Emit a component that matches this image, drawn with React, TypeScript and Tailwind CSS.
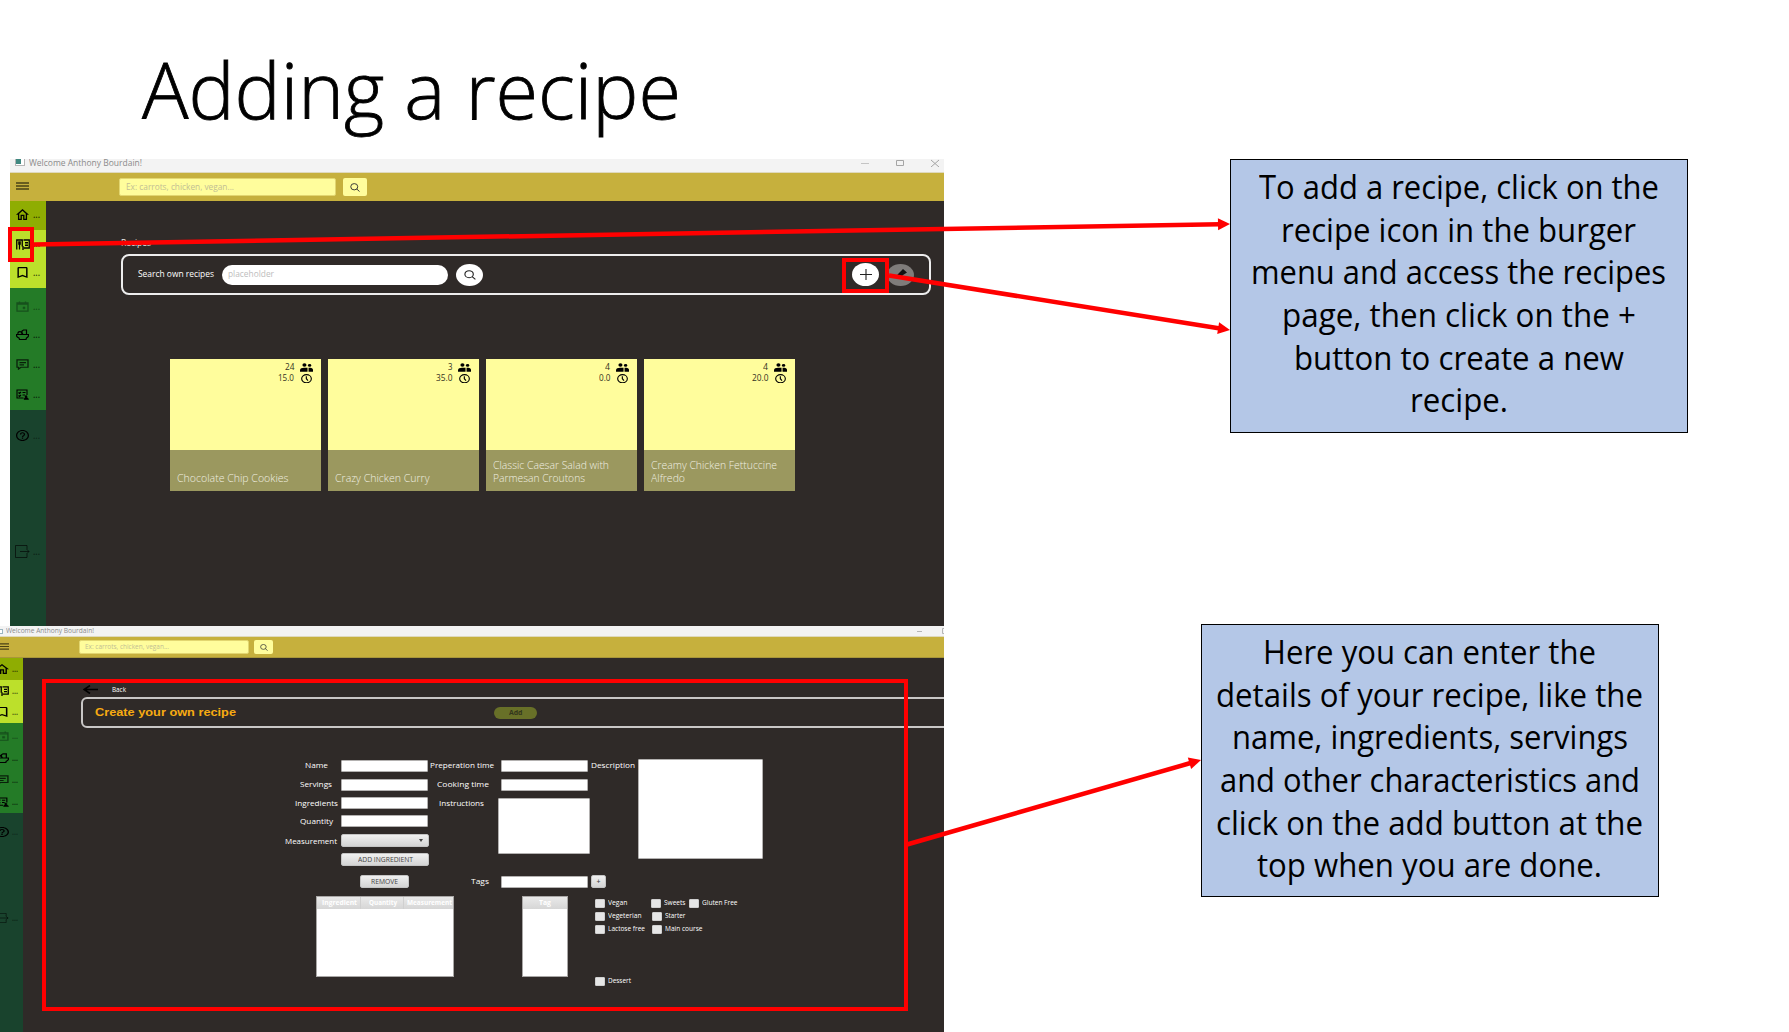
import { useLayoutEffect, useRef, useState, type ReactNode } from "react";
import { MdOutlineHome, MdBookmarkBorder, MdHelpOutline } from "react-icons/md";

/* A single line of text squeezed or stretched to an exact width. */
function Fit({ w, className = "", children }: { w: number; className?: string; children: ReactNode }) {
  const ref = useRef<HTMLSpanElement>(null);
  const [k, setK] = useState(1);
  useLayoutEffect(() => {
    if (ref.current && ref.current.offsetWidth) {
      const probe = document.createRange();
      probe.selectNodeContents(ref.current);
      setK(w / probe.getBoundingClientRect().width);
    }
  }, []);
  return (
    <span className={`block shrink-0 whitespace-nowrap leading-none ${className}`} style={{ width: w }}>
      <span ref={ref} className="inline-block origin-left" style={{ transform: `scaleX(${k})` }}>
        {children}
      </span>
    </span>
  );
}

const svg = { fill: "none", stroke: "currentColor", preserveAspectRatio: "none" as const };

const RecipeIcon = ({ className }: { className: string }) => (
  <svg viewBox="0 0 28 22" className={className} {...svg} strokeWidth="2.6">
    <path d="M1.500 21V2h11v13M15 2h11.500v16H15M18 7.500h6M18 12.500h6" />
    <path d="M7 6v15M14 14v8" strokeWidth="2.6" />
    <path d="M5 5h4v6H5z" fill="currentColor" strokeWidth="1" />
  </svg>
);
const CalendarIcon = ({ className }: { className: string }) => (
  <svg viewBox="0 0 26 24" className={className} {...svg} strokeWidth="2.6">
    <path d="M2 4h22v18H2zM2 7h22M7 1v4M19 1v4" />
    <path d="M14 13h4v4h-4z" fill="currentColor" strokeWidth="1" />
  </svg>
);
const ChatIcon = ({ className }: { className: string }) => (
  <svg viewBox="0 0 26 24" className={className} {...svg} strokeWidth="2.6">
    <path d="M2 2h22v16H10l-5 4v-4H2zM7 8h13M7 13h9" />
  </svg>
);
const BowlIcon = ({ className }: { className: string }) => (
  <svg viewBox="0 0 26 22" className={className} {...svg} strokeWidth="2.4">
    <path d="M1 11h24v2c0 3-2 4-4 5l-1 3H7l-1-3c-3-1-5-2-5-5zM4 10c-1-4 3-6 7-4M12 10V4l3-2h6v9M10 7l4 3" />
  </svg>
);
const ListIcon = ({ className }: { className: string }) => (
  <svg viewBox="0 0 26 22" className={className} {...svg} strokeWidth="2.2">
    <path d="M15 18H2V2h20v10M5 7l2 2 3-3M13 7h6M5 13l2 2 3-3M13 12h5" />
    <path d="M16 21c0-3 2-4 4-4s5 1 5 4zM18 15a2 2 0 1 0 4 0a2 2 0 1 0-4 0" fill="currentColor" strokeWidth="1" />
  </svg>
);
const LogoutIcon = ({ className }: { className: string }) => (
  <svg viewBox="0 0 30 26" className={className} {...svg} strokeWidth="2">
    <path d="M24 8V1H1v24h23v-7M10 13h18M23 8l5 5-5 5" />
  </svg>
);
const SearchIcon = ({ className }: { className: string }) => (
  <svg viewBox="0 0 20 18" className={className} {...svg} strokeWidth="1.9">
    <ellipse cx="8.5" cy="7.5" rx="7" ry="6.3" />
    <path d="M13.500 12l5.500 5" />
  </svg>
);
const PeopleIcon = ({ className }: { className: string }) => (
  <svg viewBox="0 0 38 28" className={className} fill="currentColor" preserveAspectRatio="none">
    <ellipse cx="13" cy="6.5" rx="6" ry="5.5" />
    <ellipse cx="28" cy="7.500" rx="5" ry="4.500" />
    <path d="M0 27v-4c0-6 6-8 12-8h10v12zM25 27V15h5c5 0 8 3 8 7v5z" />
  </svg>
);
const ClockIcon = ({ className }: { className: string }) => (
  <svg viewBox="0 0 33 28" className={className} {...svg} strokeWidth="3.4">
    <ellipse cx="16.5" cy="14" rx="14.500" ry="12" />
    <path d="M16 6.500V14l5 5.500" />
  </svg>
);
const Burger = ({ className }: { className: string }) => (
  <svg viewBox="0 0 13 8" className={className} {...svg} strokeWidth="1.3">
    <path d="M0 1h13M0 4h13M0 7h13" />
  </svg>
);

function Item({ small, h, dim, dot = "text-black/70", children }: { small?: boolean; h: string; dim?: string; dot?: string; children: ReactNode }) {
  return (
    <div className={`flex items-center ${h} ${small ? "gap-[3px] -ml-[5px]" : "gap-[4px] pl-[6px] -mt-px mb-px"} ${dim ?? "text-black"}`}>
      {children}
      <Fit w={small ? 6 : 7} className={`font-bold ${small ? "text-[8px]" : "text-[9px]"} ${dot}`}>...</Fit>
    </div>
  );
}

function Sidebar({ small }: { small?: boolean }) {
  const ic = small ? "w-[14px] h-[10px] shrink-0" : "w-[13px] h-[11px] shrink-0";
  const md = { preserveAspectRatio: "none", viewBox: "2 2 20 20" };
  const s = small;
  return (
    <nav className={`shrink-0 flex flex-col bg-[#19432d] ${s ? "w-[23px]" : "w-[36px]"}`}>
      <div className="flow-root bg-[#8fad02]">
        <Item small={s} h={s ? "h-[22px]" : "h-[29px]"}><MdOutlineHome className={ic} {...md} viewBox="2 3 20 17" /></Item>
      </div>
      <div className={`flow-root bg-[#bce02b] ${s ? "h-[43px]" : "h-[58px]"}`}>
        <Item small={s} h={s ? "h-[21px]" : "h-[29px]"}><RecipeIcon className={s ? ic : "w-[14px] h-[11px] mt-[2px] shrink-0 -mr-px"} /></Item>
        <Item small={s} h={s ? "h-[21px]" : "h-[29px]"}><MdBookmarkBorder className={ic} {...md} viewBox="3 3 18 18" /></Item>
      </div>
      <div className={`flow-root bg-[#247b27] ${s ? "h-[90px] pt-[2px]" : "h-[122px] pt-[5px]"}`}>
        <Item small={s} h={s ? "h-[22px]" : "h-[28px]"} dim="text-[#16501c]" dot="text-black/40"><CalendarIcon className={ic} /></Item>
        <Item small={s} h={s ? "h-[21px]" : "h-[29px]"}><BowlIcon className={ic} /></Item>
        <Item small={s} h={s ? "h-[23px]" : "h-[30px]"} dim="text-black/75"><ChatIcon className={ic} /></Item>
        <Item small={s} h={s ? "h-[22px]" : "h-[30px]"}><ListIcon className={ic} /></Item>
      </div>
      <div className={s ? "pt-[9px]" : "pt-[11px]"}>
        <Item small={s} h={s ? "h-[20px]" : "h-[30px]"} dot="text-black/40"><MdHelpOutline className={ic} {...md} /></Item>
      </div>
      <div className={s ? "mt-[66px]" : "mt-[86px]"}>
        <Item small={s} h={s ? "h-[20px]" : "h-[30px]"} dim="text-black/60" dot="text-black/50"><LogoutIcon className={s ? ic : "w-[15px] h-[13px] shrink-0 -ml-px -mr-px"} /></Item>
      </div>
    </nav>
  );
}

const recipes = [
  { n: "24", nw: 9.5, t: "15.0", tw: 16, lines: [["Chocolate Chip Cookies", 111.5]] },
  { n: "3", nw: 4.5, t: "35.0", tw: 16.5, lines: [["Crazy Chicken Curry", 94.5]] },
  { n: "4", nw: 5, t: "0.0", tw: 11.5, lines: [["Classic Caesar Salad with", 116], ["Parmesan Croutons", 92]] },
  { n: "4", nw: 5, t: "20.0", tw: 16.5, lines: [["Creamy Chicken Fettuccine", 126], ["Alfredo", 34]] },
] as { n: string; nw: number; t: string; tw: number; lines: [string, number][] }[];

function RecipesWindow() {
  return (
    <section className="ml-[10px] h-[467px] w-[934px] flex flex-col bg-[#2f2a28] font-['Open_Sans','Noto_Sans',sans-serif]">
      <div className="flex h-[14px] items-start bg-[#f3f3f3] pl-[5px] border-b border-[#dfd9bd]">
        <span className="flex h-[7px] w-[10px] border border-t-0 border-[#b5b5b5] bg-white"><i className="block h-[5px] w-[5px] bg-[#3f8880]" /></span>
        <Fit w={113} className="ml-[4px] -mt-[0.5px] text-[8.5px] text-[#8b8b8b]">Welcome Anthony Bourdain!</Fit>
        <svg className="ml-auto mr-[5px] h-[8px] w-[78px]" viewBox="0 0 78 8" fill="none" stroke="#a5a5a5">
          <path d="M0 4.500h8" stroke="#c4c4c4" />
          <path d="M70 1l8 7M78 1l-8 7M35.500 1.500h7v5h-7z" />
        </svg>
      </div>
      <div className="flex h-[28px] shrink-0 items-center bg-[#c6b03d] pl-[6px] text-[#4a4216]">
        <Burger className="-mt-[2px] h-[8px] w-[13px]" />
        <div className="ml-[90px] flex h-[18px] w-[217px] items-center rounded-[2px] border border-[#e2d670] bg-[#fffd9c] pl-[6px]">
          <Fit w={108} className="text-[8.5px] text-[#c2be94]">Ex: carrots, chicken, vegan...</Fit>
        </div>
        <div className="ml-[7px] flex h-[18px] w-[24px] items-center justify-center rounded-[2px] bg-[#fffd9c]"><SearchIcon className="h-[9px] w-[10px] text-[#333]" /></div>
      </div>
      <div className="flex min-h-0 flex-1">
        <Sidebar />
        <main className="flex-1 pl-[75px] pt-[38px]">
          <Fit w={30} className="h-[15px] text-[8.5px] text-white/90">Recipes</Fit>
          <div className="flex h-[41px] w-[809.5px] items-center rounded-[8px] border-2 border-[#ededed] pl-[15px] text-white">
            <Fit w={76} className="-mt-px text-[8.5px]">Search own recipes</Fit>
            <div className="ml-[8px] flex h-[20px] w-[226px] items-center rounded-full bg-white pl-[6px]"><Fit w={46} className="-mt-px text-[8.5px] text-[#bdbdbd]">placeholder</Fit></div>
            <div className="ml-[8px] flex h-[22px] w-[27px] items-center justify-center rounded-[50%] bg-white"><SearchIcon className="h-[10px] w-[12px] text-[#222]" /></div>
            <div className="ml-auto flex h-[23px] w-[27px] items-center justify-center rounded-[50%] bg-white">
              <svg viewBox="0 0 12 11" className="h-[11px] w-[12px]" stroke="#222" strokeWidth="1.1"><path d="M0 5.500h12M6 0v11" /></svg>
            </div>
            <div className="ml-[8px] mr-[14.5px] flex h-[22px] w-[27px] items-center justify-center rounded-[50%] bg-[#7f7c7a]">
              <svg viewBox="0 0 12 11" className="h-[11px] w-[12px]" fill="#111"><path d="M8 0l4 3.500L8 6 5 9 0 9 3 5z" /></svg>
            </div>
          </div>
          <div className="ml-[48.5px] mt-[64px] flex gap-[7px]">
            {recipes.map((r) => (
              <article key={r.lines[0][0]} className="flex h-[132px] w-[151px] flex-col bg-[#fffd9c] text-[#33321f]">
                <div className="flex h-[91px] flex-col pr-[8px] pt-[3px]">
                  <div className="flex h-[11px] items-center justify-end gap-[5.5px]"><Fit w={r.nw} className="text-[8.5px]">{r.n}</Fit><PeopleIcon className="h-[9px] w-[13px] text-black" /></div>
                  <div className="flex h-[11px] items-center justify-end gap-[6.5px] pr-px"><Fit w={r.tw} className="text-[8.5px]">{r.t}</Fit><ClockIcon className="h-[9.500px] w-[11px] text-black" /></div>
                </div>
                <div className="flex flex-1 flex-col justify-end gap-[2.5px] bg-[#9b985f] pb-[8px] pl-[7.4px] font-light text-[#f0efe2]">
                  {r.lines.map(([t, w]) => <Fit key={t} w={w} className="text-[11px]">{t}</Fit>)}
                </div>
              </article>
            ))}
          </div>
        </main>
      </div>
    </section>
  );
}

const field = "w-[87px] rounded-[1px] border border-[#b3b1b0] bg-white";
const button = "flex items-center justify-center rounded-[2px] border border-[#c4c4c4] bg-linear-to-b from-[#f0f0f0] to-[#d4d4d4] text-[#444]";

function Check({ label, w }: { label: string; w: number }) {
  return (
    <label className="flex h-[13px] items-center gap-[3px]">
      <span className="h-[9px] w-[10px] rounded-[1px] border border-[#cfcfcf] bg-[#e6e6e6]" />
      <Fit w={w} className="text-[6.5px] text-white">{label}</Fit>
    </label>
  );
}

function Label({ w, h, box, children }: { w: number; h: string; box: string; children: string }) {
  return <div className={`flex items-center justify-center ${h} ${box}`}><Fit w={w} className="-mt-[2px] text-[8px] text-white">{children}</Fit></div>;
}

function CreateWindow() {
  return (
    <section className="flex h-[406px] w-[944px] flex-col overflow-hidden bg-[#2f2a28] font-['Open_Sans','Noto_Sans',sans-serif]">
      <div className="flex h-[11px] shrink-0 items-center border-b border-[#dfd9bd] bg-[#f3f3f3]">
        <span className="h-[5px] w-[3px] border border-l-0 border-[#9ab5c0] bg-white" />
        <Fit w={88} className="ml-[3px] mt-px text-[6.5px] text-[#8b8b8b]">Welcome Anthony Bourdain!</Fit>
        <svg className="ml-auto h-[6px] w-[27px]" viewBox="0 0 27 6" fill="none" stroke="#b5b5b5"><path d="M0 3.500h5M27 .500h-1.500v5H27" /></svg>
      </div>
      <div className="flex h-[21px] shrink-0 items-center border-b border-[#a8963a] bg-[#c6b03d] text-[#4a4216]">
        <Burger className="-mt-px h-[7px] w-[9px]" />
        <div className="ml-[70px] flex h-[14px] w-[170px] items-center rounded-[2px] border border-[#e2d670] bg-[#fffd9c] pl-[5px]">
          <Fit w={84} className="mt-px text-[6.5px] text-[#c2be94]">Ex: carrots, chicken, vegan...</Fit>
        </div>
        <div className="ml-[5px] flex h-[14px] w-[19px] items-center justify-center rounded-[2px] bg-[#fffd9c]"><SearchIcon className="h-[7px] w-[8px] text-[#333]" /></div>
      </div>
      <div className="flex min-h-0 flex-1">
        <Sidebar small />
        <main className="flex-1 pl-[58px] pt-[26px]">
          <div className="flex h-[13px] items-start gap-[14px] pl-[2px]">
            <svg viewBox="0 0 15 9" className="mt-[1px] h-[9px] w-[15px]" fill="none" stroke="#000" strokeWidth="1.6"><path d="M15 4.500H1M7 .500L1 4.500l6 4" /></svg>
            <Fit w={14} className="mt-[3px] text-[6.5px] text-white">Back</Fit>
          </div>
          <div className="flex h-[31px] w-[880px] items-center rounded-[6px] border-2 border-[#c9c7c6] pl-[12px]">
            <Fit w={141} className="font-['Liberation_Sans',Arial,sans-serif] text-[11.5px] font-bold text-[#f8ab12]">Create your own recipe</Fit>
            <div className="ml-[258px] flex h-[12px] w-[43px] items-center justify-center rounded-full bg-[#687028]"><Fit w={13.5} className="text-[7px] font-bold text-[#33361c]">Add</Fit></div>
          </div>
          <div className="ml-[203px] mt-[31px] flex h-[116px]">
            <div className="flex w-[57px] flex-col">
              <Label w={23} h="h-[14px]" box="w-[64px]">Name</Label>
              <Label w={32} h="h-[24px]" box="w-[63px]">Servings</Label>
              <Label w={43} h="h-[14px]" box="w-[64px]">Ingredients</Label>
              <Label w={33} h="h-[22px]" box="w-[64px]">Quantity</Label>
              <Label w={52} h="h-[17px]" box="w-[54px]">Measurement</Label>
            </div>
            <div className="flex w-[88px] flex-col pt-[1px]">
              <div className={`${field} h-[12px]`} />
              <div className={`${field} mt-[7px] h-[12px]`} />
              <div className={`${field} mt-[6px] h-[12px]`} />
              <div className={`${field} mt-[6px] h-[12px]`} />
              <div className={`${button} mt-[7px] h-[13px] w-[88px] justify-end pr-[5px]`}><i className="border-x-[2.5px] border-t-[3px] border-x-transparent border-t-[#444]" /></div>
              <div className={`${button} mt-[6px] h-[13px] w-[88px]`}><Fit w={55} className="-mt-px text-[7px]">ADD INGREDIENT</Fit></div>
            </div>
            <div className="flex w-[69px] flex-col">
              <Label w={64} h="h-[14px]" box="w-[66px]">Preperation time</Label>
              <Label w={52} h="h-[24px]" box="w-[67px]">Cooking time</Label>
              <Label w={45} h="h-[14px]" box="w-[64px]">Instructions</Label>
            </div>
            <div className="flex w-[92px] flex-col items-center pt-[1px]">
              <div className={`${field} h-[12px]`} />
              <div className={`${field} mt-[7px] h-[12px]`} />
              <div className="mt-[7px] h-[56px] w-[92px] rounded-[1px] border border-[#b3b1b0] bg-white" />
            </div>
            <div className="w-[48px]"><Label w={44} h="h-[14px]" box="w-[46px]">Description</Label></div>
            <div className="h-[100px] w-[125px] rounded-[1px] border border-[#b3b1b0] bg-white" />
          </div>
          <div className="ml-[279px] flex h-[13px] items-center">
            <div className={`${button} h-[13px] w-[49px]`}><Fit w={27} className="-mt-px text-[7px]">REMOVE</Fit></div>
            <Fit w={18} className="ml-[62px] -mt-px text-[8px] text-white">Tags</Fit>
            <div className={`${field} ml-[12px] h-[12px]`} />
            <div className={`${button} ml-[3px] h-[13px] w-[15px] text-[7px] leading-none font-semibold`}>+</div>
          </div>
          <div className="ml-[235px] mt-[8px] flex">
            <div className="h-[81px] w-[138px] border border-[#a9a7a6] bg-white">
              <div className="flex h-[12px] items-center bg-linear-to-b from-[#e9e9e9] to-[#d6d6d6] text-[6.5px] font-bold text-white">
                <span className="flex h-full w-[44px] items-center border-r border-[#d0d0d0] pl-[5px]"><Fit w={35}>Ingredient</Fit></span>
                <span className="flex h-full w-[43px] items-center border-r border-[#d0d0d0] pl-[8px]"><Fit w={28}>Quantity</Fit></span>
                <Fit w={45} className="ml-[3px]">Measurement</Fit>
              </div>
            </div>
            <div className="ml-[68px] h-[81px] w-[46px] border border-[#a9a7a6] bg-white">
              <div className="flex h-[12px] items-center justify-center bg-linear-to-b from-[#e9e9e9] to-[#d6d6d6]"><Fit w={12} className="text-[6.5px] font-bold text-white">Tag</Fit></div>
            </div>
            <div className="ml-[26.5px] pt-[1px]">
              <div className="flex"><div className="w-[56px]"><Check label="Vegan" w={19.5} /></div><div className="w-[38.5px]"><Check label="Sweets" w={21.5} /></div><Check label="Gluten Free" w={35.5} /></div>
              <div className="flex"><div className="w-[57px]"><Check label="Vegeterian" w={33.5} /></div><Check label="Starter" w={20.5} /></div>
              <div className="flex"><div className="w-[57px]"><Check label="Lactose free" w={37} /></div><Check label="Main course" w={37.5} /></div>
              <div className="mt-[38.5px]"><Check label="Dessert" w={23} /></div>
            </div>
          </div>
        </main>
      </div>
    </section>
  );
}

function Callout({ className, lines }: { className: string; lines: [string, number][] }) {
  return (
    <aside className={`flex w-[458px] flex-col items-center border border-black bg-[#b4c7e7] pr-px pt-[6px] font-['Open_Sans','Noto_Sans',sans-serif] text-[32px] text-black ${className}`}>
      {lines.map(([t, w]) => <div key={t} className="flex h-[42.6px] items-center"><Fit w={w}>{t}</Fit></div>)}
    </aside>
  );
}

function Arrow({ x1, y1, x2, y2 }: { x1: number; y1: number; x2: number; y2: number }) {
  const len = Math.hypot(x2 - x1, y2 - y1);
  const ang = (Math.atan2(y2 - y1, x2 - x1) * 180) / Math.PI;
  return (
    <g transform={`translate(${x1} ${y1}) rotate(${ang})`} fill="#ff0000">
      <rect x="0" y="-2.25" width={len - 10} height="4.5" />
      <path d={`M${len} 0l-12 -6v12z`} />
    </g>
  );
}

export default function App() {
  return (
    <div className="relative flex h-[1032px] w-[1789px] overflow-hidden bg-white">
      <div className="flex w-[944px] shrink-0 flex-col">
        <h1 className="flex h-[159px] items-center pl-[142px] font-['Open_Sans','Noto_Sans',sans-serif] text-[77px] font-light text-black [-webkit-text-stroke:0.8px_black]">
          <Fit w={539} className="mt-[20px]">Adding a recipe</Fit>
        </h1>
        <RecipesWindow />
        <CreateWindow />
      </div>
      <div className="flex flex-col pt-[159px]">
        <Callout
          className="ml-[286px] h-[274px]"
          lines={[["To add a recipe, click on the", 400], ["recipe icon in the burger", 355], ["menu and access the recipes", 415], ["page, then click on the +", 354], ["button to create a new", 330], ["recipe.", 98]]}
        />
        <Callout
          className="ml-[257px] mt-[191px] h-[273px]"
          lines={[["Here you can enter the", 333], ["details of your recipe, like the", 427], ["name, ingredients, servings", 396], ["and other characteristics and", 420], ["click on the add button at the", 427], ["top when you are done.", 345]]}
        />
      </div>
      <div className="absolute left-[8px] top-[227px] h-[35px] w-[26px] border-4 border-[#ff0000]" />
      <div className="absolute left-[842px] top-[258px] h-[35px] w-[47px] border-4 border-[#ff0000]" />
      <div className="absolute left-[42px] top-[679px] h-[332px] w-[866px] border-4 border-[#ff0000]" />
      <svg className="absolute inset-0 h-[1032px] w-[1789px]" viewBox="0 0 1789 1032">
        <Arrow x1={34} y1={244.5} x2={1230} y2={224} />
        <Arrow x1={889} y1={275.5} x2={1230} y2={330} />
        <Arrow x1={907} y1={844.5} x2={1201} y2={760} />
      </svg>
    </div>
  );
}
